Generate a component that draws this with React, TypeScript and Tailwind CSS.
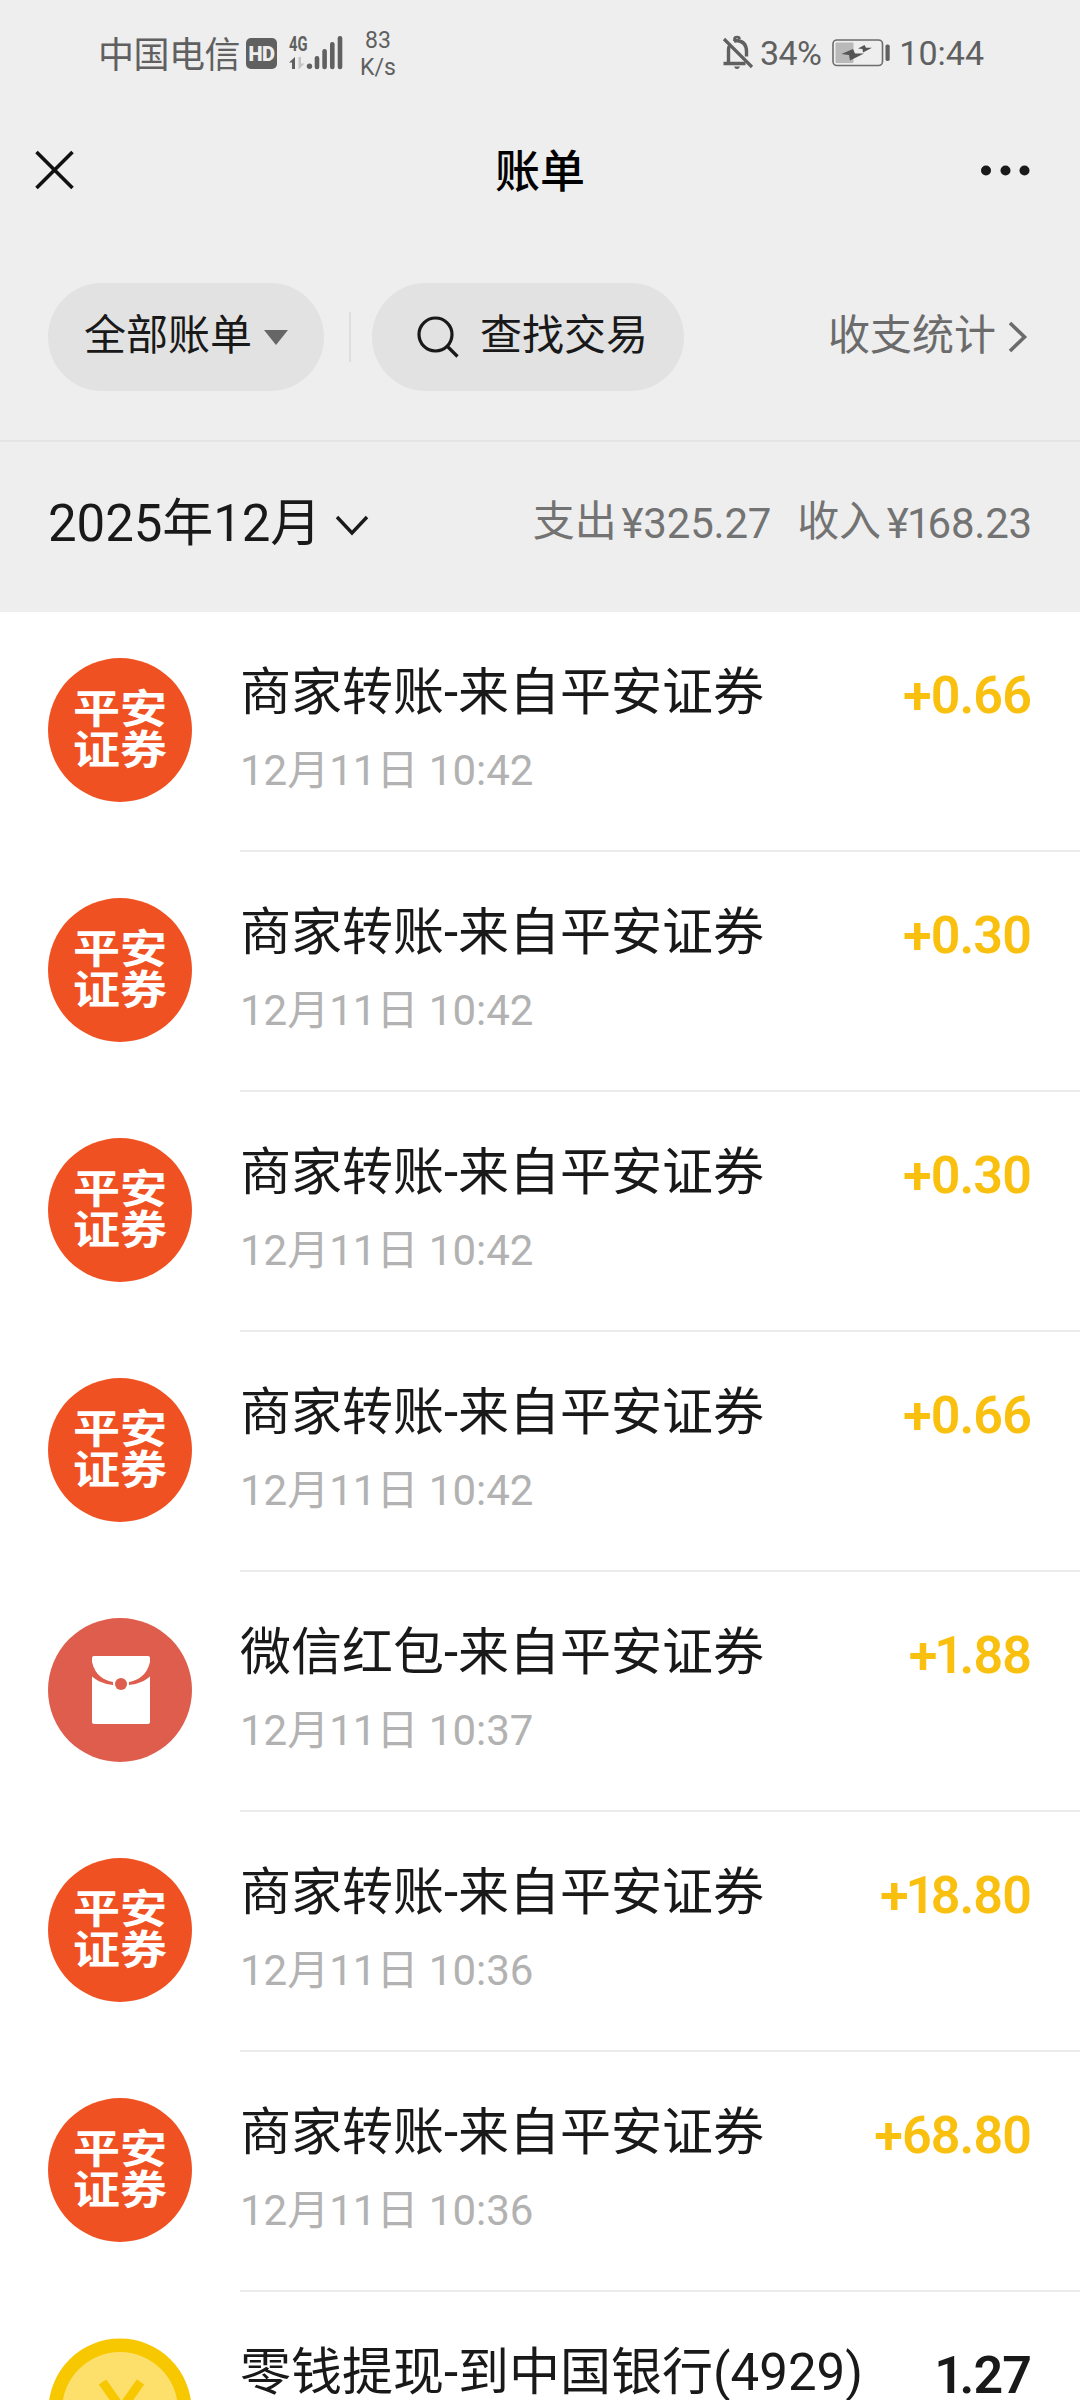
import { ReactNode } from "react";

type RecordKind = "pingan" | "redPacket" | "coin";

interface BillRecord {
  id: number;
  kind: RecordKind;
  title: string;
  time: string;
  amount: string;
}

const records: BillRecord[] = [
  { id: 1, kind: "pingan", title: "商家转账-来自平安证券", time: "12月11日 10:42", amount: "+0.66" },
  { id: 2, kind: "pingan", title: "商家转账-来自平安证券", time: "12月11日 10:42", amount: "+0.30" },
  { id: 3, kind: "pingan", title: "商家转账-来自平安证券", time: "12月11日 10:42", amount: "+0.30" },
  { id: 4, kind: "pingan", title: "商家转账-来自平安证券", time: "12月11日 10:42", amount: "+0.66" },
  { id: 5, kind: "redPacket", title: "微信红包-来自平安证券", time: "12月11日 10:37", amount: "+1.88" },
  { id: 6, kind: "pingan", title: "商家转账-来自平安证券", time: "12月11日 10:36", amount: "+18.80" },
  { id: 7, kind: "pingan", title: "商家转账-来自平安证券", time: "12月11日 10:36", amount: "+68.80" },
  { id: 8, kind: "coin", title: "零钱提现-到中国银行(4929)", time: "", amount: "1.27" },
];

function SignalIcon() {
  return (
    <svg width="54" height="36" viewBox="0 0 54 36" fill="#606060">
      <path d="M6 21v12H3v-6.500H0z" />
      <path d="M9.500 21h2.500v6.500h3.500l-6 6z" fill="#c4c4c4" />
      <circle cx="20.500" cy="30.300" r="2.700" />
      <rect x="25.700" y="20" width="4.600" height="13.200" rx="2.200" />
      <rect x="33.300" y="13" width="4.600" height="20.200" rx="2.200" />
      <rect x="41" y="6" width="4.600" height="27.200" rx="2.200" />
      <rect x="48.700" y="0" width="4.600" height="33.200" rx="2.200" />
    </svg>
  );
}

function MutedBellIcon() {
  return (
    <svg width="32" height="36" viewBox="0 0 32 36" fill="none" stroke="#606060" strokeWidth="3">
      <path d="M2 4l28 28" strokeWidth="3.200" />
      <path d="M1.500 28.500h22M6.500 28V15q0-3 1.500-5" strokeWidth="3.400" />
      <path d="M12 6.500q1.500-1 3-1 9.500 1 9.500 11v5" strokeWidth="3.400" />
      <path d="M12.500 6V4q0-2 2.500-2t2.500 2" strokeWidth="2.600" />
      <path d="M12 31.500h6q-1 2.500-3 2.500t-3-2.500z" fill="#606060" stroke="none" />
    </svg>
  );
}

function BatteryIcon() {
  return (
    <svg width="60" height="28" viewBox="0 0 60 28">
      <rect x="1" y="1" width="49.500" height="25.500" rx="4" fill="none" stroke="#6c6c6c" strokeWidth="1.600" />
      <rect x="3.500" y="3.500" width="18" height="20.500" rx="1" fill="#b9b9b9" />
      <path d="M9.500 15L21 10l2 4.500h9L18 21.500 17 16z" fill="#555" />
      <path d="M26 9.500L32.500 6 34 8.700h6L31 13.500 30.500 10z" fill="#555" />
      <rect x="53.500" y="5.500" width="4.200" height="16.500" rx="1.800" fill="#606060" />
    </svg>
  );
}

function StatusBar() {
  return (
    <div className="flex h-[108px] items-start pl-[98px] pr-[96px] text-[#606060]">
      <div className="flex h-[108px] items-start">
        <span className="w-[148px] pt-[36px] text-[36px] leading-[40px] tracking-[-0.5px]">中国电信</span>
        <span className="mt-[38px] flex h-[31px] w-[31px] items-center justify-center rounded-[5px] bg-[#606060] text-[20px] font-black leading-none tracking-[-0.5px] text-[#eee]">
          HD
        </span>
        <div className="relative ml-[12px] mt-[36px]">
          <SignalIcon />
          <span className="absolute -top-[2px] left-0 origin-left scale-x-70 text-[21px] font-bold leading-[20px]">
            4G
          </span>
        </div>
        <div className="ml-[17px] mt-[27px] flex w-[36px] flex-col items-center text-[23px] leading-[27px]">
          <span>83</span>
          <span>K/s</span>
        </div>
      </div>
      <div className="ml-auto flex items-start">
        <div className="mt-[35px]">
          <MutedBellIcon />
        </div>
        <span className="ml-[6px] mt-[33px] text-[34px] leading-[40px] tracking-[-0.6px]">34%</span>
        <div className="ml-[11px] mt-[39px]">
          <BatteryIcon />
        </div>
        <span className="ml-[7px] mt-[33px] text-[34px] leading-[40px]">10:44</span>
      </div>
    </div>
  );
}

function NavBar() {
  return (
    <div className="flex h-[124px] items-center justify-between pl-[35px] pr-[50px]">
      <svg width="50" height="40" viewBox="0 0 50 40" fill="none" stroke="#111" strokeWidth="3.600">
        <path d="M1.500 2l36 36M37.500 2l-36 36" />
      </svg>
      <h1 className="ml-[15px] pt-[6px] text-[45px] font-medium leading-[60px] text-black">账单</h1>
      <svg width="50" height="12" viewBox="0 0 50 12" fill="#191919">
        <circle cx="6" cy="6.500" r="5" />
        <circle cx="25.500" cy="6.500" r="5" />
        <circle cx="44.500" cy="6.500" r="5" />
      </svg>
    </div>
  );
}

function Pill({ className, children }: { className: string; children: ReactNode }) {
  return (
    <button className={`flex h-[108px] items-center rounded-full bg-[#e2e2e2] text-[42px] leading-[60px] text-[#191919] ${className}`}>
      {children}
    </button>
  );
}

function FilterBar() {
  return (
    <div className="flex h-[210px] items-start border-b-2 border-[#e4e4e4] pl-12 pr-[52px] pt-[51px]">
      <Pill className="w-[276px] pl-[36px]">
        <span className="-mt-[2px]">全部账单</span>
        <svg className="ml-[12px]" width="24" height="15" viewBox="0 0 24 15" fill="#666">
          <path d="M0 0h24L12 15z" />
        </svg>
      </Pill>
      <div className="ml-[25px] mt-[29px] h-[50px] w-[2px] bg-[#dedede]" />
      <Pill className="ml-[21px] w-[312px] pl-[44px]">
        <svg width="44" height="44" viewBox="0 0 44 44" fill="none" stroke="#191919" strokeWidth="3.200">
          <circle cx="19.500" cy="19.500" r="16.500" />
          <path d="M31 31l10.500 10.500" />
        </svg>
        <span className="-mt-[2px] ml-[20px]">查找交易</span>
      </Pill>
      <div className="ml-auto flex h-[108px] items-center text-[42px] leading-[60px] text-[#6b6b6b]">
        <span className="-mt-[2px]">收支统计</span>
        <svg className="ml-[12px]" width="20" height="32" viewBox="0 0 20 32" fill="none" stroke="#6b6b6b" strokeWidth="3.600">
          <path d="M2 2l14.500 14L2 30" />
        </svg>
      </div>
    </div>
  );
}

// The digit 1 is set tighter than the other figures
function Figures({ value }: { value: string }) {
  return (
    <span>
      {value.split(/(1)/).map((part, idx) =>
        part === "1" ? (
          <span key={idx} className="-ml-[0.04em] -mr-[0.07em]">
            1
          </span>
        ) : (
          part
        )
      )}
    </span>
  );
}

function MonthSummary() {
  return (
    <div className="flex h-[170px] items-center pb-[6px] pl-12 pr-[48px]">
      <span className="text-[51px] leading-[60px] tracking-[-0.1px] text-[#191919]">2025年12月</span>
      <svg className="ml-[14px] mt-[3px]" width="34" height="22" viewBox="0 0 34 22" fill="none" stroke="#191919" strokeWidth="3.400">
        <path d="M2 2l15 16L32 2" />
      </svg>
      <div className="ml-auto flex gap-[26px] text-[42px] leading-[60px] tracking-[-0.2px] text-[#737373]">
        <span className="flex">
          <span className="-mt-[2px] mr-[5px]">支出</span>
          <Figures value="¥325.27" />
        </span>
        <span className="flex">
          <span className="-mt-[2px] mr-[6px]">收入</span>
          <Figures value="¥168.23" />
        </span>
      </div>
    </div>
  );
}

function Avatar({ kind }: { kind: RecordKind }) {
  if (kind === "pingan") {
    return (
      <div className="flex size-36 flex-col items-center justify-center rounded-full bg-[#f05123] text-[47px] font-bold leading-[41px] text-white">
        <span className="scale-y-[0.84]">平安</span>
        <span className="scale-y-[0.84]">证券</span>
      </div>
    );
  }

  if (kind === "redPacket") {
    return (
      <svg width="144" height="144" viewBox="0 0 144 144">
        <circle cx="72" cy="72" r="72" fill="#de5d4d" />
        <path d="M46 38h54q2 0 2 2v64q0 2-2 2H46q-2 0-2-2V40q0-2 2-2z" fill="#fff" />
        <path d="M44 44C47 57 56 62.500 65 64V67C56 66 49 63 44 58.500z" fill="#de5d4d" />
        <path d="M102 44C99 57 90 62.500 81 64V67C90 66 97 63 102 58.500z" fill="#de5d4d" />
        <circle cx="73" cy="66" r="6" fill="#de5d4d" />
      </svg>
    );
  }

  return (
    <svg width="144" height="144" viewBox="0 0 144 144">
      <circle cx="72" cy="72" r="71.500" fill="#f7c700" />
      <circle cx="72" cy="72" r="58" fill="#fde06c" />
      <path d="M54.500 44l19 27L92.500 44M73.500 70v35M54 75h39M54 89h39" fill="none" stroke="#f7c700" strokeWidth="9" />
    </svg>
  );
}

function BillRow({ record }: { record: BillRecord }) {
  const isIncome = record.amount.startsWith("+");

  return (
    <li className="flex h-[240px] pl-12">
      <div className="w-48 shrink-0 pt-[46px]">
        <Avatar kind={record.kind} />
      </div>
      <div className="flex flex-1 items-start justify-between border-b-2 border-[#ebebeb] pr-[49px]">
        <div className="whitespace-nowrap pt-[51px]">
          <p className="text-[51px] leading-[60px] text-[#191919]">{record.title}</p>
          <p className="mt-[23px] text-[42px] leading-[50px] text-[#b2b2b2]">{record.time}</p>
        </div>
        <div
          className={`pt-[54px] text-[52px] font-semibold leading-[60px] tracking-[-0.9px] ${
            isIncome ? "text-[#fac010]" : "text-[#191919]"
          }`}
        >
          <Figures value={record.amount} />
        </div>
      </div>
    </li>
  );
}

export default function App() {
  return (
    <div className="h-[2400px] w-[1080px] overflow-hidden bg-white font-['Roboto','Noto_Sans_CJK_SC',sans-serif]">
      <header className="bg-[#eeeeee]">
        <StatusBar />
        <NavBar />
        <FilterBar />
        <MonthSummary />
      </header>
      <ul>
        {records.map((record) => (
          <BillRow key={record.id} record={record} />
        ))}
      </ul>
    </div>
  );
}
